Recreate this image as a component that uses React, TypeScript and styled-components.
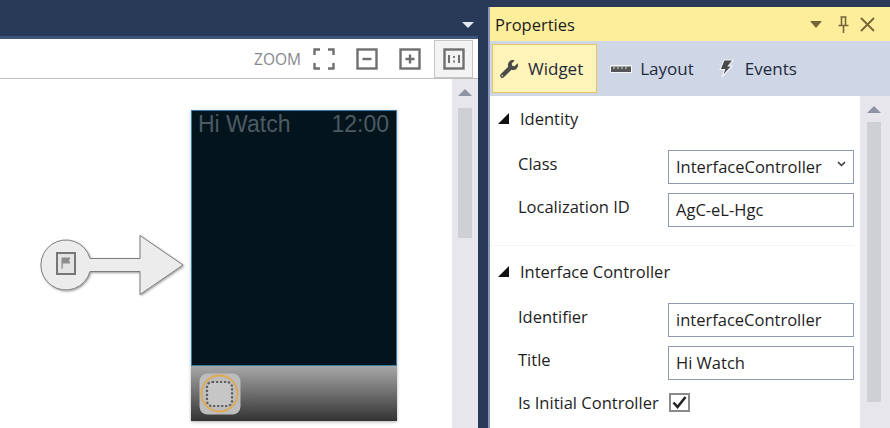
import React from "react";
import styled, { createGlobalStyle } from "styled-components";
import { FaWrench } from "react-icons/fa";

const GlobalStyle = createGlobalStyle`
  html, body {
    margin: 0;
    padding: 0;
    height: 428px;
    overflow: hidden;
    background: #293a58;
    font-family: "Open Sans", "Noto Sans", sans-serif;
  }
`;

const App: React.FC = () => {
  return (
    <Page>
      <GlobalStyle />
      <Designer>
        <TopBar>
          <TopCaret />
        </TopBar>
        <Toolbar>
          <ZoomLabel>ZOOM</ZoomLabel>
          <ToolIcon>
            <svg width="22" height="22" viewBox="0 0 22 22" fill="none" stroke="#6f6f6f" strokeWidth="2.4">
              <path d="M1.5 7V1.5H7M15 1.5H20.5V7M20.5 15V20.5H15M7 20.5H1.5V15" />
            </svg>
          </ToolIcon>
          <ToolIcon>
            <svg width="22" height="22" viewBox="0 0 22 22" fill="none">
              <rect x="1.5" y="1.5" width="19" height="19" stroke="#6f6f6f" strokeWidth="2.4" />
              <path d="M6.5 11H15.5" stroke="#6f6f6f" strokeWidth="2.4" />
            </svg>
          </ToolIcon>
          <ToolIcon>
            <svg width="22" height="22" viewBox="0 0 22 22" fill="none">
              <rect x="1.5" y="1.5" width="19" height="19" stroke="#6f6f6f" strokeWidth="2.4" />
              <path d="M6.5 11H15.5M11 6.5V15.5" stroke="#6f6f6f" strokeWidth="2.4" />
            </svg>
          </ToolIcon>
          <ActualSizeButton>
            <svg width="22" height="22" viewBox="0 0 22 22" fill="none">
              <rect x="1.5" y="1.5" width="19" height="19" stroke="#6f6f6f" strokeWidth="2.4" />
              <path d="M6 7V15M16 7V15" stroke="#6f6f6f" strokeWidth="2" />
              <path d="M11 8V10M11 12.5V14.5" stroke="#6f6f6f" strokeWidth="1.8" />
            </svg>
          </ActualSizeButton>
        </Toolbar>
        <CanvasArea>
          <Canvas>
            <StartArrow>
              <svg width="152" height="64" viewBox="0 0 152 64">
                <defs>
                  <filter id="arrowShadow" x="-10%" y="-20%" width="120%" height="140%">
                    <feDropShadow dx="1" dy="1" stdDeviation="1.2" floodColor="#000" floodOpacity="0.4" />
                  </filter>
                  <filter id="iconBlur">
                    <feGaussianBlur stdDeviation="0.5" />
                  </filter>
                </defs>
                <path
                  d="M101 24.5V1.5L144 31L101 60.5V37.5H51A25 25 0 1 1 51 24.5Z"
                  fill="#ececec"
                  stroke="#7d7d7d"
                  strokeWidth="1"
                  filter="url(#arrowShadow)"
                />
                <g filter="url(#iconBlur)">
                  <rect x="18" y="19" width="18" height="21" fill="#e4e4e4" stroke="#777" strokeWidth="2" />
                  <path d="M23 35V24H31L29.5 26.5L31 29H24" fill="#8c8c8c" stroke="#8c8c8c" strokeWidth="1" />
                </g>
              </svg>
            </StartArrow>
            <Watch>
              <WatchScreen>
                <WatchTitle>Hi Watch</WatchTitle>
                <WatchTitle>12:00</WatchTitle>
              </WatchScreen>
              <WatchFooter>
                <svg width="42" height="42" viewBox="0 0 42 42">
                  <rect x="0.5" y="0.5" width="41" height="41" rx="8" fill="#bdbdbd" />
                  <rect x="8" y="9" width="25" height="24" rx="5" fill="#c6c6c6" stroke="#5f5f5f" strokeWidth="2.2" strokeDasharray="2.2 1.8" />
                  <circle cx="20.5" cy="20.5" r="18" fill="none" stroke="#e0a94f" strokeWidth="1.8" />
                </svg>
              </WatchFooter>
            </Watch>
          </Canvas>
          <Scrollbar $width={26} $left={6}>
            <ScrollUp $gap={12} />
            <ScrollThumb $height={130} />
          </Scrollbar>
        </CanvasArea>
      </Designer>
      <PropertiesPanel>
        <TitleBar>
          <PanelTitle>Properties</PanelTitle>
          <TitleButtons>
            <svg width="12" height="7" viewBox="0 0 12 7">
              <path d="M0 0H12L6 7Z" fill="#75653b" />
            </svg>
            <svg width="11" height="17" viewBox="0 0 11 17" fill="none" stroke="#75653b">
              <path d="M2.5 1H8.5M3.5 1V9M7.5 1V9M0.5 9.5H10.5" strokeWidth="1.6" />
              <path d="M5.5 10V17" strokeWidth="1.6" />
            </svg>
            <svg width="15" height="15" viewBox="0 0 15 15" fill="none" stroke="#75653b" strokeWidth="1.8">
              <path d="M1 1L14 14M14 1L1 14" />
            </svg>
          </TitleButtons>
        </TitleBar>
        <TabStrip>
          <Tab $active>
            <TabIcon $gap={10}>
              <FaWrench size={18} color="#4a4a4a" />
            </TabIcon>
            Widget
          </Tab>
          <Tab>
            <TabIcon $gap={8}>
              <svg width="22" height="8" viewBox="0 0 22 8">
                <rect width="22" height="8" fill="#f4f4f4" />
                <path d="M1 1.5H21V7H1Z" fill="#555" />
                <path d="M4 1.5V4M8 1.5V4M12 1.5V4M16 1.5V4" stroke="#ddd" strokeWidth="1" />
              </svg>
            </TabIcon>
            Layout
          </Tab>
          <Tab>
            <TabIcon $gap={11}>
              <svg width="16" height="19" viewBox="0 0 16 19">
                <path d="M6 1H15L10.5 7H14L4 18L6.5 10.5H2Z" fill="#4a4a4a" stroke="#f2f4f8" strokeWidth="1.2" />
              </svg>
            </TabIcon>
            Events
          </Tab>
        </TabStrip>
        <PanelBody>
          <Form>
            <SectionHeader>
              <Disclosure />
              Identity
            </SectionHeader>
            <FieldGroup>
              <FieldRow>
                <FieldLabel>Class</FieldLabel>
                <FieldBox>
                  InterfaceController
                  <SelectChevron width="9" height="6" viewBox="0 0 9 6" fill="none" stroke="#333" strokeWidth="1.5">
                    <path d="M1 1L4.5 4.5L8 1" />
                  </SelectChevron>
                </FieldBox>
              </FieldRow>
              <FieldRow>
                <FieldLabel>Localization ID</FieldLabel>
                <FieldBox>AgC-eL-Hgc</FieldBox>
              </FieldRow>
            </FieldGroup>
            <SectionRule />
            <SectionHeader>
              <Disclosure />
              Interface Controller
            </SectionHeader>
            <FieldGroup>
              <FieldRow>
                <FieldLabel>Identifier</FieldLabel>
                <FieldBox>interfaceController</FieldBox>
              </FieldRow>
              <FieldRow>
                <FieldLabel>Title</FieldLabel>
                <FieldBox>Hi Watch</FieldBox>
              </FieldRow>
              <CheckRow>
                <CheckLabel>Is Initial Controller</CheckLabel>
                <CheckBox>
                  <svg width="15" height="13" viewBox="0 0 15 13" fill="none" stroke="#222" strokeWidth="2.6">
                    <path d="M1.5 6.5L5.5 11L13.5 1" />
                  </svg>
                </CheckBox>
              </CheckRow>
            </FieldGroup>
          </Form>
          <Scrollbar $width={30} $left={7}>
            <ScrollUp $gap={9} />
            <ScrollThumb $height={280} />
          </Scrollbar>
        </PanelBody>
      </PropertiesPanel>
    </Page>
  );
};

const Page = styled.div`
  display: flex;
  width: 890px;
  height: 428px;
  overflow: hidden;
  background: #293a58;
`;

const Designer = styled.div`
  display: flex;
  flex-direction: column;
  width: 478px;
  height: 428px;
`;

const TopBar = styled.div`
  display: flex;
  justify-content: flex-end;
  align-items: flex-start;
  height: 36px;
  padding: 22px 4px 0 0;
  box-sizing: border-box;
`;

const TopCaret = styled.div`
  width: 0;
  height: 0;
  border-left: 6px solid transparent;
  border-right: 6px solid transparent;
  border-top: 6px solid #e6e9f0;
`;

const Toolbar = styled.div`
  display: flex;
  justify-content: flex-end;
  align-items: flex-start;
  height: 43px;
  flex: none;
  box-sizing: border-box;
  border-top: 3px solid #3f5579;
  border-bottom: 1px solid #bdbdbd;
  background: #fff;
  padding-top: 1px;
  padding-right: 5px;
`;

const ZoomLabel = styled.span`
  font-size: 15.5px;
  line-height: 38px;
  color: #85878c;
  margin-right: 12px;
`;

const ToolIcon = styled.div`
  display: flex;
  align-items: center;
  justify-content: center;
  width: 22px;
  height: 22px;
  margin: 8px 21px 0 0;
`;

const ActualSizeButton = styled.div`
  display: flex;
  align-items: center;
  justify-content: center;
  width: 39px;
  height: 38px;
  box-sizing: border-box;
  border: 1px solid #c6c6c6;
  background: #f3f3f3;
  margin-left: -8px;
`;

const CanvasArea = styled.div`
  display: flex;
  flex: 1;
  background: #fff;
  min-height: 0;
`;

const Canvas = styled.div`
  display: flex;
  flex: 1;
  align-items: flex-start;
  padding: 31px 0 0 39px;
`;

const StartArrow = styled.div`
  width: 152px;
  height: 64px;
  margin-top: 124px;
`;

const Watch = styled.div`
  display: flex;
  flex-direction: column;
  width: 206px;
  box-shadow: 0 1px 3px rgba(0, 0, 0, 0.3);
`;

const WatchScreen = styled.div`
  display: flex;
  justify-content: space-between;
  align-items: flex-start;
  height: 256px;
  box-sizing: border-box;
  border: 1px solid #3a7ca3;
  background: #04141d;
  padding: 0 7px 0 6px;
`;

const WatchTitle = styled.span`
  font-family: "Liberation Sans", Arial, sans-serif;
  font-size: 23px;
  line-height: 26px;
  color: #4c5a62;
`;

const WatchFooter = styled.div`
  display: flex;
  align-items: flex-start;
  height: 55px;
  box-sizing: border-box;
  padding: 7px 0 0 8px;
  background: linear-gradient(#a8a8a8, #333);
`;

const Scrollbar = styled.div<{ $width: number; $left: number }>`
  display: flex;
  flex-direction: column;
  align-items: flex-start;
  flex: none;
  width: ${({ $width }) => $width}px;
  padding: 10px 0 0 ${({ $left }) => $left}px;
  box-sizing: border-box;
  background: #e6e6ec;
`;

const ScrollUp = styled.div<{ $gap: number }>`
  width: 0;
  height: 0;
  border-left: 7px solid transparent;
  border-right: 7px solid transparent;
  border-bottom: 7px solid #8f93a6;
  margin-bottom: ${({ $gap }) => $gap}px;
  flex: none;
`;

const ScrollThumb = styled.div<{ $height: number }>`
  flex: none;
  width: 14px;
  height: ${({ $height }) => $height}px;
  background: #cfcfd6;
`;

const PropertiesPanel = styled.div`
  display: flex;
  flex-direction: column;
  width: 402px;
  height: 421px;
  margin: 7px 0 0 10px;
  box-sizing: border-box;
  border-left: 2px solid #8796b6;
`;

const TitleBar = styled.div`
  display: flex;
  justify-content: space-between;
  align-items: center;
  height: 34px;
  flex: none;
  box-sizing: border-box;
  padding: 0 15px 0 5px;
  background: #fdee9c;
`;

const PanelTitle = styled.span`
  font-size: 16.5px;
  color: #1c1c1c;
`;

const TitleButtons = styled.div`
  display: flex;
  align-items: center;
  gap: 11px;

  & > :first-child {
    margin-right: 5px;
  }
`;

const TabStrip = styled.div`
  display: flex;
  align-items: flex-start;
  height: 55px;
  flex: none;
  box-sizing: border-box;
  padding: 3px 0 0 2px;
  background: #cfd6e6;
`;

const Tab = styled.div<{ $active?: boolean }>`
  display: flex;
  align-items: center;
  height: 49px;
  box-sizing: border-box;
  padding: 0 ${({ $active }) => ($active ? "13px" : "11px")} 0 7px;
  margin-right: ${({ $active }) => ($active ? "5px" : "4px")};
  border: 1px solid ${({ $active }) => ($active ? "#e5c365" : "transparent")};
  background: ${({ $active }) => ($active ? "#fef3b8" : "transparent")};
  font-size: 17px;
  color: #1e2a3c;
`;

const TabIcon = styled.span<{ $gap: number }>`
  display: flex;
  align-items: center;
  margin-right: ${({ $gap }) => $gap}px;
`;

const PanelBody = styled.div`
  display: flex;
  flex: 1;
  min-height: 0;
  background: #fff;
`;

const Form = styled.div`
  flex: 1;
  padding: 11px 6px 0 8px;
`;

const SectionHeader = styled.div`
  display: flex;
  align-items: center;
  height: 22px;
  font-size: 16.5px;
  color: #1e1e1e;
`;

const Disclosure = styled.span`
  width: 0;
  height: 0;
  border-left: 11px solid transparent;
  border-bottom: 11px solid #111;
  margin-right: 11px;
`;

const FieldGroup = styled.div`
  display: flex;
  flex-direction: column;
  gap: 9px;
  margin-top: 21px;
  padding-left: 20px;
`;

const FieldRow = styled.div`
  display: flex;
  justify-content: space-between;
  align-items: flex-start;
`;

const FieldLabel = styled.label`
  font-size: 16.5px;
  line-height: 28px;
  color: #1e1e1e;
`;

const FieldBox = styled.div`
  position: relative;
  width: 186px;
  height: 34px;
  box-sizing: border-box;
  border: 1px solid #8f9ab0;
  padding-left: 7px;
  font-size: 16.5px;
  line-height: 32px;
  color: #1e1e1e;
  white-space: nowrap;
`;

const SelectChevron = styled.svg`
  position: absolute;
  right: 7px;
  top: 10px;
`;

const SectionRule = styled.div`
  height: 1px;
  background: #f4f4f4;
  margin: 18px 0 14px -8px;
`;

const CheckRow = styled.div`
  display: flex;
  align-items: center;
  height: 19px;
  margin-top: 4px;
`;

const CheckLabel = styled.span`
  width: 151px;
  font-size: 16.5px;
  white-space: nowrap;
  color: #1e1e1e;
`;

const CheckBox = styled.div`
  display: flex;
  align-items: center;
  justify-content: center;
  width: 21px;
  height: 19px;
  box-sizing: border-box;
  border: 2px solid #8a8a8a;
`;

export default App;
